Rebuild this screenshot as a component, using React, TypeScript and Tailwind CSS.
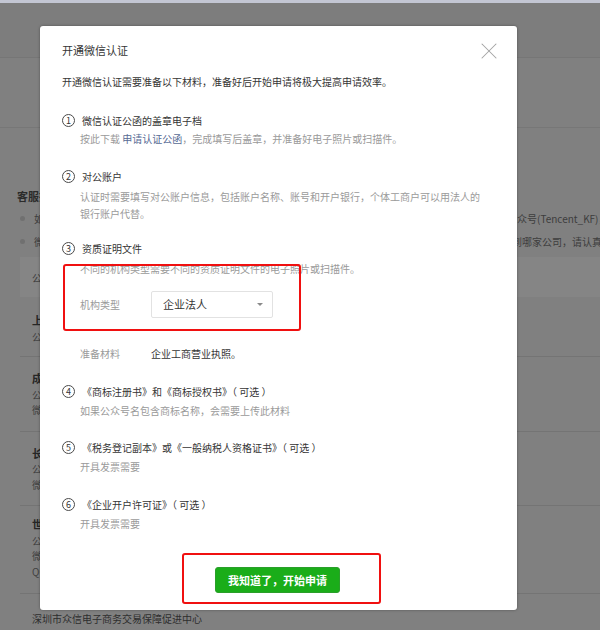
import { X } from 'lucide-react';

function Num({ n }: { n: number }) {
  return (
    <span className="w-[13px] h-[13px] rounded-full border border-[#4a4a4a] text-[9px] leading-none flex items-center justify-center text-[#353535] mr-[7px] shrink-0">
      {n}
    </span>
  );
}

function Item({ n, title, children, top }: { n: number; title: string; children: React.ReactNode; top: string }) {
  return (
    <div className={top}>
      <div className="flex items-center leading-[17px] text-[#353535]">
        <Num n={n} />
        <span>{title}</span>
      </div>
      {children}
    </div>
  );
}

export default function App() {
  const entries = [
    { cls: 'pt-[16px] pb-[12px]', lines: ['上海', '公众号'] },
    { cls: 'pt-[14px] pb-[13px]', lines: ['成都', '公众号', '微信号'] },
    { cls: 'pt-[14px] pb-[13px]', lines: ['长沙', '公众号', '微信号'] },
    { cls: 'pt-[11px] pb-[14px]', lines: ['世纪', '公众号', '微信号', 'QQ'] },
  ];

  return (
    <div className="relative w-[600px] h-[630px] overflow-hidden bg-[#808080] font-['Noto_Sans_CJK_SC','Noto_Sans',sans-serif] text-[10px]">
      {/* page behind the mask */}
      <div className="h-[3px] bg-[#c3c6d3]" />
      <div className="h-[55px] bg-[#7d7d7d] border-b border-[#767676]" />
      <div className="h-[70px] border-b border-[#777777]" />
      <div className="pl-[17px]">
        <div className="pt-[60px] leading-[16px] font-bold text-[#2b2b2b] text-[11px]">客服投诉说明</div>
        <div className="mt-[3px] pl-[3px]">
          <div className="flex items-center leading-[23px] text-[#3d3d3d] whitespace-nowrap">
            <span className="w-[5px] h-[5px] rounded-full bg-[#707070] mr-[9px] shrink-0" />
            <span className="w-[473px] overflow-hidden shrink-0">如需帮助请联系客服</span>
            <span>公众号(Tencent_KF)，如有疑问</span>
          </div>
          <div className="flex items-center leading-[23px] text-[#3d3d3d] whitespace-nowrap">
            <span className="w-[492px] overflow-hidden shrink-0 flex items-center">
              <span className="w-[5px] h-[5px] rounded-full bg-[#707070] mr-[9px] shrink-0" />
              微信认证费用
            </span>
            <span>到哪家公司，请认真核对</span>
          </div>
        </div>
        <div className="mt-[4px] ml-[3px] h-[40px] bg-[#858585] flex items-center pl-[12px] text-[#3d3d3d]">公众号</div>
        <div className="ml-[3px]">
          {entries.map((e, i) => (
            <div key={i} className={`${e.cls} pl-[12px] border-b border-[#747474] text-[#404040] leading-[15.5px]`}>
              {e.lines.map((l, j) => (
                <div key={j} className={j === 0 ? 'font-bold text-[#262626] text-[11px]' : ''}>{l}</div>
              ))}
            </div>
          ))}
          <div className="pl-[12px] pt-[17px] leading-[16px] text-[#2e2e2e]">深圳市众信电子商务交易保障促进中心</div>
        </div>
      </div>

      {/* dialog */}
      <div className="absolute left-[40px] top-[26px] w-[477px] h-[584px] bg-white rounded-[3px] shadow-[0_0_3px_rgba(0,0,0,0.35)] text-[10px]">
        <div className="flex items-center justify-between pl-[22px] pr-[14px] pt-[16px] leading-[17px]">
          <span className="text-[11px] text-[#353535]">开通微信认证</span>
          <X className="w-[28px] h-[28px] -my-[6px] text-[#a3a3a3]" strokeWidth={0.9} />
        </div>
        <div className="pl-[22px] pr-[22px]">
          <div className="mt-[14px] leading-[17px] text-[#353535]">开通微信认证需要准备以下材料，准备好后开始申请将极大提高申请效率。</div>

          <Item n={1} title="微信认证公函的盖章电子档" top="mt-[22px]">
            <div className="mt-[1px] pl-[18px] leading-[17px] text-[#9a9a9a]">
              按此下载 <span className="text-[#576b95]">申请认证公函</span>，完成填写后盖章，并准备好电子照片或扫描件。
            </div>
          </Item>

          <Item n={2} title="对公账户" top="mt-[21px]">
            <div className="mt-[3px] pl-[18px] pr-[6px] leading-[17px] text-[#9a9a9a]">
              认证时需要填写对公账户信息，包括账户名称、账号和开户银行，个体工商户可以用法人的银行账户代替。
            </div>
          </Item>

          <Item n={3} title="资质证明文件" top="mt-[18px]">
            <div className="mt-[3px] pl-[18px] leading-[17px] text-[#9a9a9a]">
              不同的机构类型需要不同的资质证明文件的电子照片或扫描件。
            </div>
            <div className="mt-[14px] pl-[18px] flex items-center">
              <span className="w-[71px] text-[#9a9a9a]">机构类型</span>
              <div className="w-[122px] h-[27px] border border-[#e2e2e2] rounded-[2px] flex items-center justify-between pl-[11px] pr-[9px] text-[11px] text-[#353535]">
                <span>企业法人</span>
                <span className="w-0 h-0 border-l-[3px] border-r-[3px] border-t-[3px] border-l-transparent border-r-transparent border-t-[#8a8a8a]" />
              </div>
            </div>
            <div className="mt-[27px] pl-[18px] flex items-center leading-[17px]">
              <span className="w-[71px] text-[#9a9a9a]">准备材料</span>
              <span className="text-[#353535]">企业工商营业执照。</span>
            </div>
          </Item>

          <Item n={4} title="《商标注册书》和《商标授权书》（ 可选 ）" top="mt-[21px]">
            <div className="mt-[2px] pl-[18px] leading-[17px] text-[#9a9a9a]">如果公众号名包含商标名称，会需要上传此材料</div>
          </Item>

          <Item n={5} title="《税务登记副本》或《一般纳税人资格证书》（ 可选 ）" top="mt-[20px]">
            <div className="mt-[2px] pl-[18px] leading-[17px] text-[#9a9a9a]">开具发票需要</div>
          </Item>

          <Item n={6} title="《企业开户许可证》（ 可选 ）" top="mt-[21px]">
            <div className="mt-[2px] pl-[18px] leading-[17px] text-[#9a9a9a]">开具发票需要</div>
          </Item>

          <div className="mt-[35px] flex justify-center">
            <button className="w-[125px] h-[26px] bg-[#1aad19] border border-[#2a9f2a] rounded-[3px] text-white text-[11px] font-bold ml-[-2px]">
              我知道了，开始申请
            </button>
          </div>
        </div>
      </div>

      {/* annotation boxes */}
      <div className="absolute left-[63px] top-[264px] w-[238px] h-[67px] border-2 border-[#f01010] rounded-[3px]" />
      <div className="absolute left-[182px] top-[553px] w-[199px] h-[51px] border-2 border-[#f01010] rounded-[3px]" />
    </div>
  );
}
